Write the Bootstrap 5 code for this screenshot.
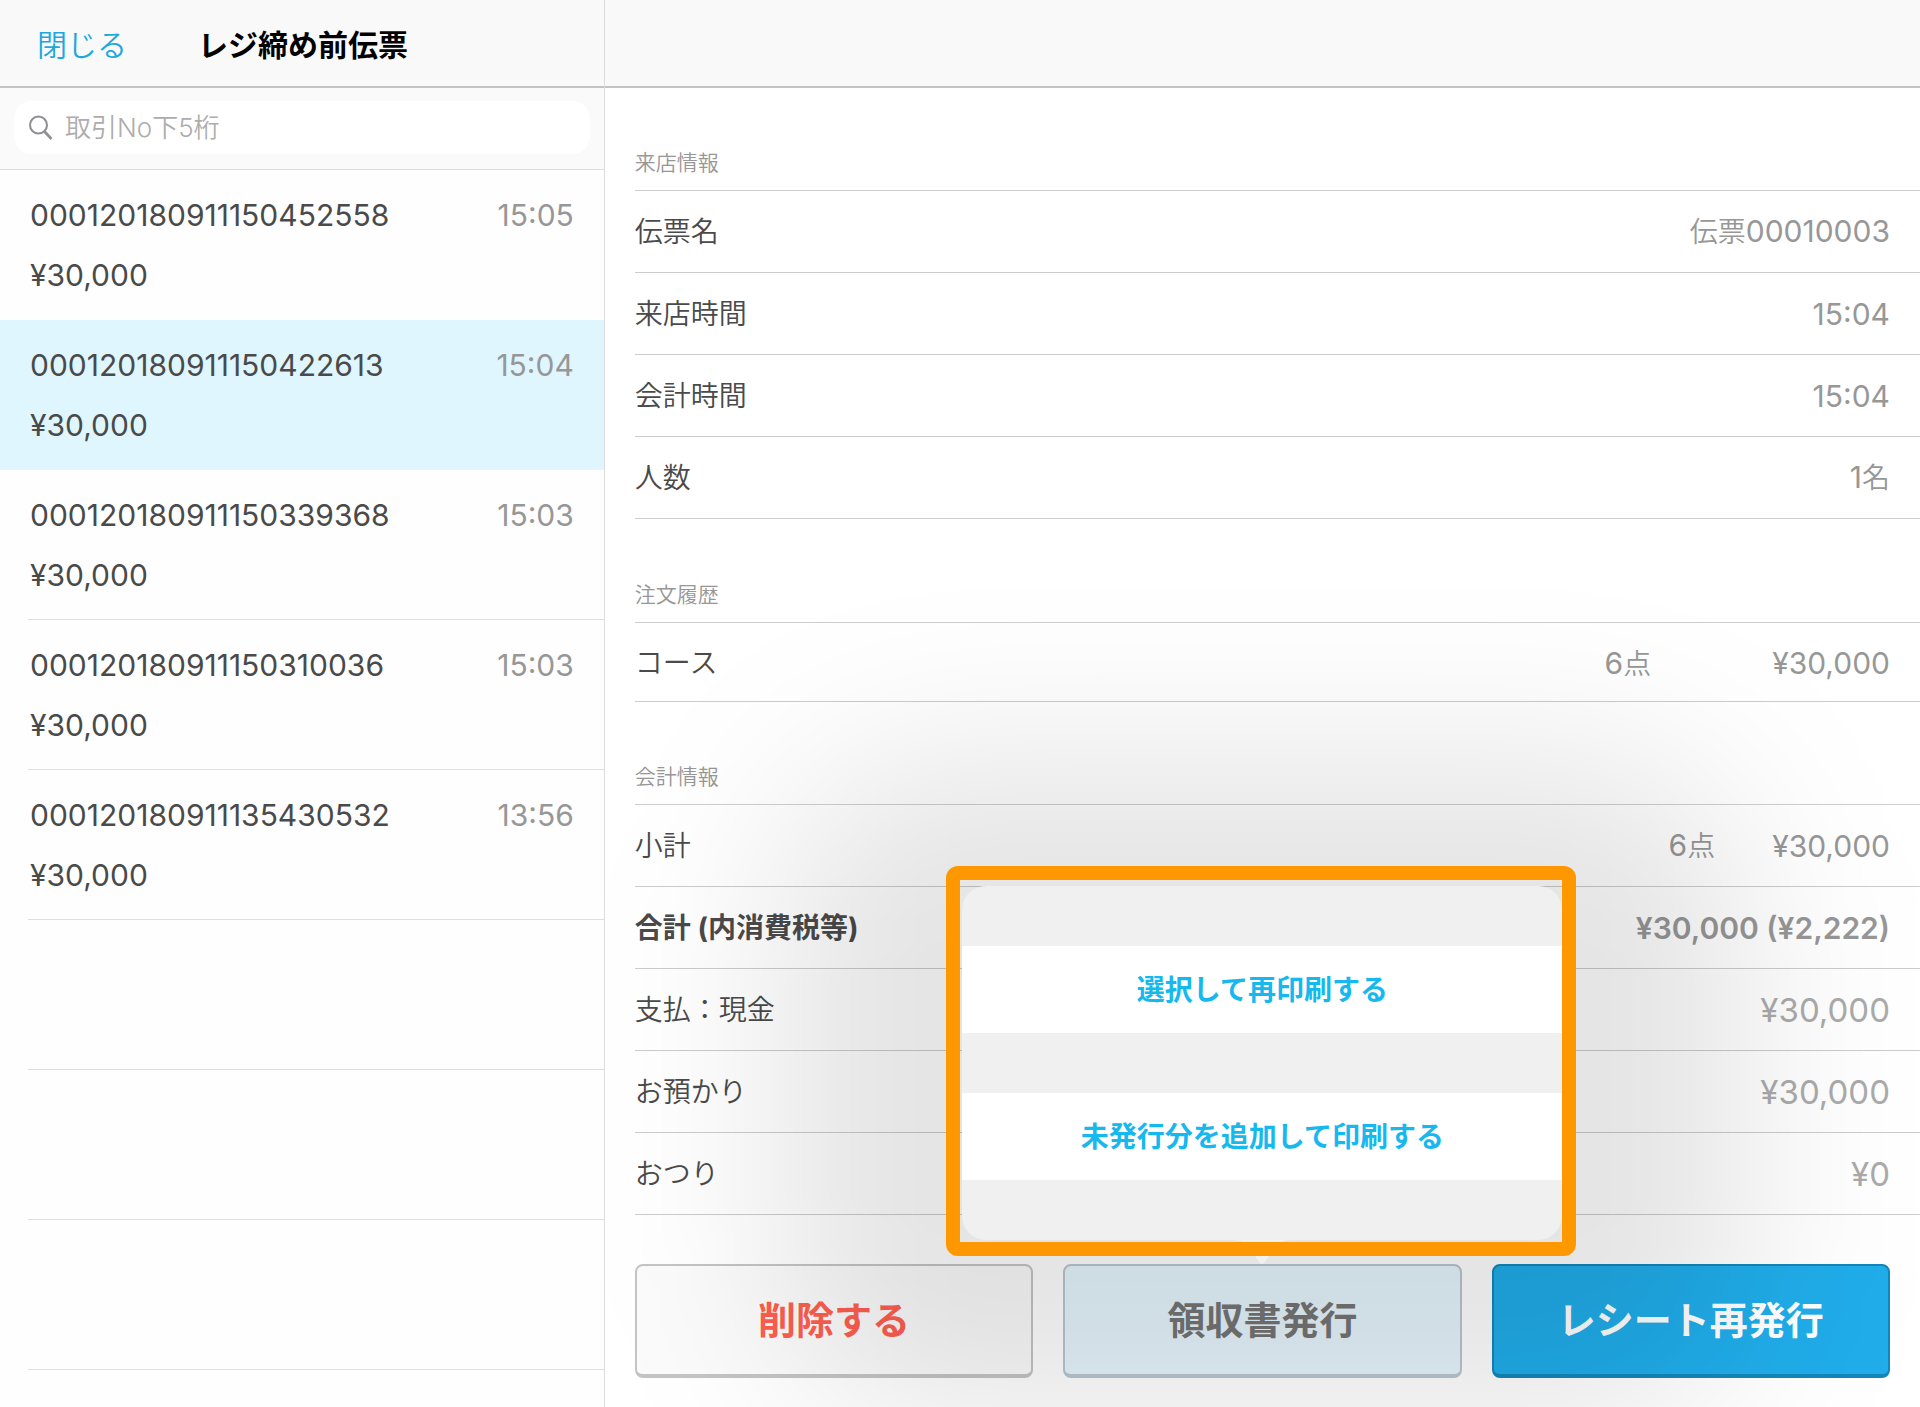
<!DOCTYPE html>
<html lang="ja">
<head>
<meta charset="utf-8">
<meta name="viewport" content="width=device-width, initial-scale=1">
<title>レジ締め前伝票</title>
<link href="https://cdn.jsdelivr.net/npm/bootstrap@5.3.0/dist/css/bootstrap.min.css" rel="stylesheet">
<style>
  body { font-family: Inter, "Noto Sans CJK JP", sans-serif; font-size: 30px; line-height: 40px; color: #4a4a4a; background: #fff; }
  a { text-decoration: none; }
  .app { min-height: 100vh; overflow: hidden; }
  .side-pane { flex: 0 0 31.5%; min-width: 0; border-right: 1px solid #dcdcdc; background: #fefefe; }
  .top-bar { height: 88px; padding: 4px 0 0 37px; gap: 71px; background: #f9f9f9; border-bottom: 2px solid #c2c2c2; font-size: 30px; }
  .close-link { color: #1ca8dd; font-weight: 350; }
  .bar-title { font-size: 30px; line-height: 40px; color: #000; }

  .search-area { height: 82px; padding: 13px 14px 15px; background: #fafafa; border-bottom: 1px solid #dedede; }
  .search-box { height: 53px; padding: 0 14px; gap: 12px; background: #fff; border-radius: 18px; }
  .search-box input { border: 0; outline: 0; background: transparent; font-size: 26px; font-weight: 350; color: #4a4a4a; padding: 0; min-width: 0; }
  .search-box input::placeholder { color: #adadad; opacity: 1; }

  .slip { display: block; height: 150px; padding-left: 28px; color: #4a4a4a; }
  .slip-body { height: 100%; padding: 25px 30px 0 2px; border-bottom: 1px solid #dedede; }
  .slip-body > div + div { margin-top: 20px; }
  .slip.no-line .slip-body { border-color: transparent; }
  .slip.selected { background: #dff6ff; }
  .dim { color: #979797; }
  .dimmer { color: #ababab; font-size: 33px; }

  .group-head { height: 103px; margin: 0; padding-bottom: 11px; font-size: 21px; line-height: 32px; font-weight: 350; color: #979797; border-bottom: 1px solid #cfcfcf; }
  .sheet { padding-left: 30px; }
  .detail { height: 82px; padding-right: 30px; border-bottom: 1px solid #cccccc; }
  .detail dt { font-size: 28px; font-weight: 350; }
  .detail dd { margin: 0; }
  .detail.total dt { font-weight: 700; }
  .detail.total dd { font-weight: 600; }
  .order-group .group-head { height: 104px; }
  .order-group .detail { height: 79px; padding-top: 2px; }
  .detail .qty { margin-right: 57px; }
  .order-group .detail .qty { margin-right: 121px; }
  .cjk { font-size: 28px; font-weight: 350; }

  .actions { padding: 49px 30px 29px 0; gap: 30px; }
  .act { height: 114px; width: 100%; font-size: 38px; font-weight: 700; border: 2px solid #c0c0c0; border-bottom-width: 4px; border-radius: 8px; padding: 0; }
  .act-delete { color: #ff5f50; background: #fbfbfb; border-color: #c4c4c4; }
  .act-issue { color: #757575; background: #e6f5fd; border-color: #bac6d0; }
  .act-reprint { color: #fff; background: #20adea; border-color: #1486bb; }

  /* menu that opens above the middle button, and the soft shade around it */
  .bubble-shade { position: absolute; z-index: 4; bottom: -40px; left: 50%; width: 970px; height: 660px; transform: translateX(-50%); border-radius: 160px; background: rgba(0,0,0,.105); filter: blur(90px); pointer-events: none; }
  .bubble { position: absolute; z-index: 5; bottom: calc(100% + 24px); left: 50%; width: 600px; transform: translateX(-50%); padding: 60px 0; background: #f0f0f0; border-radius: 24px; }
  .bubble button { display: block; width: 100%; height: 87px; border: 0; background: #fff; color: #16b8ee; font-size: 28px; font-weight: 700; }
  .bubble button + button { margin-top: 60px; }
  .bubble-tip { position: absolute; top: 100%; left: 50%; width: 60px; height: 24px; transform: translateX(-50%); }
  .bubble::after { content: ""; position: absolute; inset: -20px -14px -16px -16px; border: 14px solid #ff9800; border-radius: 12px; pointer-events: none; }
</style>
</head>
<body>
<div class="app d-flex">
  <aside class="side-pane d-flex flex-column">
    <header class="top-bar d-flex align-items-center">
      <a href="#" class="close-link">閉じる</a>
      <h1 class="bar-title fw-bold mb-0">レジ締め前伝票</h1>
    </header>
    <div class="search-area">
      <div class="search-box d-flex align-items-center">
        <svg width="25" height="28" viewBox="0 0 25 28" fill="none" stroke="#8e8e93" stroke-width="2" aria-hidden="true"><circle cx="10.500" cy="11" r="8.500"/><path d="M16.500 17.500L23.500 25" stroke-width="2.600"/></svg>
        <input type="search" class="flex-grow-1" aria-label="取引No下5桁" placeholder="取引No下5桁">
      </div>
    </div>
    <nav aria-label="伝票一覧">
      <a href="#" class="slip no-line"><div class="slip-body"><div class="d-flex justify-content-between"><span>000120180911150452558</span><span class="dim">15:05</span></div><div>¥30,000</div></div></a>
      <a href="#" class="slip no-line selected" aria-current="true"><div class="slip-body"><div class="d-flex justify-content-between"><span>000120180911150422613</span><span class="dim">15:04</span></div><div>¥30,000</div></div></a>
      <a href="#" class="slip"><div class="slip-body"><div class="d-flex justify-content-between"><span>000120180911150339368</span><span class="dim">15:03</span></div><div>¥30,000</div></div></a>
      <a href="#" class="slip"><div class="slip-body"><div class="d-flex justify-content-between"><span>000120180911150310036</span><span class="dim">15:03</span></div><div>¥30,000</div></div></a>
      <a href="#" class="slip"><div class="slip-body"><div class="d-flex justify-content-between"><span>000120180911135430532</span><span class="dim">13:56</span></div><div>¥30,000</div></div></a>
      <div class="slip"><div class="slip-body"></div></div>
      <div class="slip"><div class="slip-body"></div></div>
      <div class="slip"><div class="slip-body"></div></div>
    </nav>
  </aside>

  <main class="flex-grow-1 d-flex flex-column">
    <div class="top-bar"></div>
    <div class="sheet">
      <section>
        <h2 class="group-head d-flex align-items-end">来店情報</h2>
        <dl class="mb-0">
          <div class="detail d-flex align-items-center justify-content-between"><dt>伝票名</dt><dd class="dim"><span class="cjk">伝票</span>00010003</dd></div>
          <div class="detail d-flex align-items-center justify-content-between"><dt>来店時間</dt><dd class="dim">15:04</dd></div>
          <div class="detail d-flex align-items-center justify-content-between"><dt>会計時間</dt><dd class="dim">15:04</dd></div>
          <div class="detail d-flex align-items-center justify-content-between"><dt>人数</dt><dd class="dim">1<span class="cjk">名</span></dd></div>
        </dl>
      </section>
      <section class="order-group">
        <h2 class="group-head d-flex align-items-end">注文履歴</h2>
        <dl class="mb-0">
          <div class="detail d-flex align-items-center"><dt class="me-auto">コース</dt><dd class="dim qty">6<span class="cjk">点</span></dd><dd class="dim">¥30,000</dd></div>
        </dl>
      </section>
      <section>
        <h2 class="group-head d-flex align-items-end">会計情報</h2>
        <dl class="mb-0">
          <div class="detail d-flex align-items-center"><dt class="me-auto">小計</dt><dd class="dim qty">6<span class="cjk">点</span></dd><dd class="dim">¥30,000</dd></div>
          <div class="detail total d-flex align-items-center justify-content-between"><dt>合計 (内消費税等)</dt><dd class="dim">¥30,000 (¥2,222)</dd></div>
          <div class="detail d-flex align-items-center justify-content-between"><dt>支払：現金</dt><dd class="dimmer">¥30,000</dd></div>
          <div class="detail d-flex align-items-center justify-content-between"><dt>お預かり</dt><dd class="dimmer">¥30,000</dd></div>
          <div class="detail d-flex align-items-center justify-content-between"><dt>おつり</dt><dd class="dimmer">¥0</dd></div>
        </dl>
      </section>
      <div class="actions d-flex">
        <div class="flex-fill w-100"><button type="button" class="act act-delete">削除する</button></div>
        <div class="flex-fill w-100 position-relative">
          <button type="button" class="act act-issue" aria-expanded="true">領収書発行</button>
          <div class="bubble-shade"></div>
          <div class="bubble" role="group" aria-label="領収書発行">
            <button type="button">選択して再印刷する</button>
            <button type="button">未発行分を追加して印刷する</button>
            <svg class="bubble-tip" viewBox="0 0 60 24" aria-hidden="true"><path d="M0 0C12 0 17 6 22 14C26 21 28 24 30 24C32 24 34 21 38 14C43 6 48 0 60 0Z" fill="#f1f1f1"/></svg>
          </div>
        </div>
        <div class="flex-fill w-100"><button type="button" class="act act-reprint">レシート再発行</button></div>
      </div>
    </div>
  </main>
</div>
<script src="https://cdn.jsdelivr.net/npm/bootstrap@5.3.0/dist/js/bootstrap.bundle.min.js"></script>
</body>
</html>
